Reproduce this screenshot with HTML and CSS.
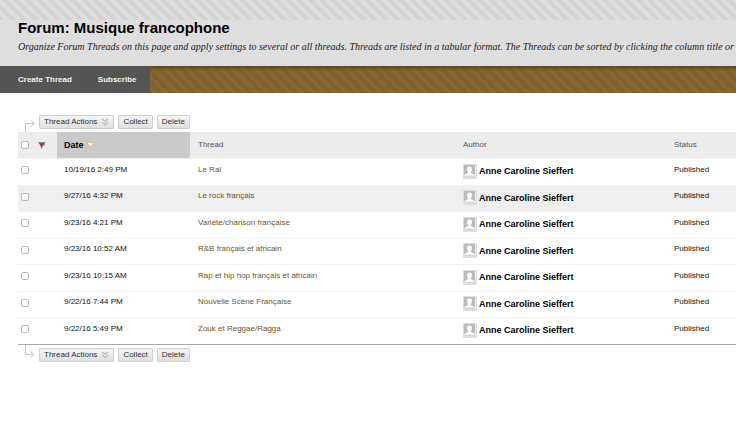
FILE: index.html
```html
<!DOCTYPE html>
<html lang="en">
<head>
<meta charset="utf-8">
<title>Forum: Musique francophone</title>
<link rel="stylesheet" href="styles.css">
</head>
<body>
<svg class="defs" aria-hidden="true">
  <symbol id="person" viewBox="0 0 14 15">
    <path d="M.5.5h13v13H.5z" fill="#eee" stroke="#ddd"/>
    <path d="M1 1h11v10H1z" fill="#bbb"/>
    <path d="M2 11V10.500C3 9.900 4.500 9.500 5.300 8.700C4 7 3.900 5 4.300 3.800C5 2 8 2 8.700 3.800C9.100 5 9 7 7.700 8.700C8.500 9.500 10 9.900 11 10.500V11z" fill="#fff"/>
    <path d="M1 12.500h11" stroke="#d6d6d6"/>
    <path d="M0 14.500h14" stroke="#ddd"/>
  </symbol>
  <symbol id="chevrons" viewBox="0 0 8 8">
    <path d="M1 .8l3 2.700L7 .8M1 4l3 2.700L7 4" fill="none" stroke="#bbb" stroke-width="1.200"/>
  </symbol>
</svg>
<header class="page-head">
  <h1>Forum: Musique francophone</h1>
  <p>Organize Forum Threads on this page and apply settings to several or all threads. Threads are listed in a tabular format. The Threads can be sorted by clicking the column title or the</p>
</header>
<nav class="action-bar">
  <ul>
    <li><a href="#create">Create Thread</a></li>
    <li><a href="#subscribe">Subscribe</a></li>
  </ul>
</nav>
<main>
  <div class="tools">
    <svg class="hook" viewBox="0 0 13 14" aria-hidden="true"><path d="M1.500 14V5.500H10M7 2.500l3.500 3L7 8.500" fill="none" stroke="#c4c4c4"/></svg>
    <button type="button">Thread Actions <svg class="chev" aria-hidden="true"><use href="#chevrons"/></svg></button>
    <button type="button">Collect</button>
    <button type="button">Delete</button>
  </div>
  <table>
    <thead>
      <tr>
        <th class="check"><input type="checkbox" aria-label="Select all threads"></th>
        <th class="flag"><svg viewBox="0 0 8 8" aria-label="Flag"><path d="M.5 1l3 .5L7.500 1 6.500 3l.5 1.500-2-.2L3.800 8z" fill="#80606a"/><path d="M1.200 1.800l4 .3-1.200 2.400-1 0z" fill="#a02f40"/></svg></th>
        <th class="date">Date <svg viewBox="0 0 9 6" aria-hidden="true"><path d="M.6.6h7.800L4.500 5.200z" fill="#fff8cf" stroke="#c9b183" stroke-width=".8"/></svg></th>
        <th class="thread">Thread</th>
        <th class="author">Author</th>
        <th>Status</th>
      </tr>
    </thead>
    <tbody>
      <tr><td><input type="checkbox" aria-label="Select Le Raï"></td><td></td><td>10/19/16 2:49 PM</td><td><a href="#t1">Le Raï</a></td><td class="who"><div><svg><use href="#person"/></svg>Anne Caroline Sieffert</div></td><td>Published</td></tr>
      <tr><td><input type="checkbox" aria-label="Select Le rock français"></td><td></td><td>9/27/16 4:32 PM</td><td><a href="#t2">Le rock français</a></td><td class="who"><div><svg><use href="#person"/></svg>Anne Caroline Sieffert</div></td><td>Published</td></tr>
      <tr><td><input type="checkbox" aria-label="Select Variété/chanson française"></td><td></td><td>9/23/16 4:21 PM</td><td><a href="#t3">Variété/chanson française</a></td><td class="who"><div><svg><use href="#person"/></svg>Anne Caroline Sieffert</div></td><td>Published</td></tr>
      <tr><td><input type="checkbox" aria-label="Select R&amp;B français et africain"></td><td></td><td>9/23/16 10:52 AM</td><td><a href="#t4">R&amp;B français et africain</a></td><td class="who"><div><svg><use href="#person"/></svg>Anne Caroline Sieffert</div></td><td>Published</td></tr>
      <tr><td><input type="checkbox" aria-label="Select Rap et hip hop français et africain"></td><td></td><td>9/23/16 10:15 AM</td><td><a href="#t5">Rap et hip hop français et africain</a></td><td class="who"><div><svg><use href="#person"/></svg>Anne Caroline Sieffert</div></td><td>Published</td></tr>
      <tr><td><input type="checkbox" aria-label="Select Nouvelle Scène Française"></td><td></td><td>9/22/16 7:44 PM</td><td><a href="#t6">Nouvelle Scène Française</a></td><td class="who"><div><svg><use href="#person"/></svg>Anne Caroline Sieffert</div></td><td>Published</td></tr>
      <tr><td><input type="checkbox" aria-label="Select Zouk et Reggae/Ragga"></td><td></td><td>9/22/16 5:49 PM</td><td><a href="#t7">Zouk et Reggae/Ragga</a></td><td class="who"><div><svg><use href="#person"/></svg>Anne Caroline Sieffert</div></td><td>Published</td></tr>
    </tbody>
  </table>
  <div class="tools tools-bottom">
    <svg class="hook" viewBox="0 0 13 14" aria-hidden="true"><path d="M1.500 0V9.500H9M6.500 6.500l3.500 3L6.500 12.500" fill="none" stroke="#cacaca"/></svg>
    <button type="button">Thread Actions <svg class="chev" aria-hidden="true"><use href="#chevrons"/></svg></button>
    <button type="button">Collect</button>
    <button type="button">Delete</button>
  </div>
</main>
</body>
</html>
```
FILE: styles.css
```css
* { box-sizing: border-box; }

body {
  margin: 0;
  background: #fff;
  color: #111;
  font: 8px/12px "Liberation Sans", Arial, sans-serif;
  overflow-x: hidden;
}

.defs { display: none; }

.page-head {
  height: 66px;
  padding: 18px 0 0 18px;
  background: repeating-linear-gradient(45deg, #d3d3d3 0 3px, #dedede 4px 7px, #d3d3d3 8px) 0 0 / 100% 20px no-repeat #dedede;
  overflow: hidden;
  white-space: nowrap;
}

h1 {
  margin: 0;
  color: #000;
  font-size: 15px;
  line-height: 20px;
}

.page-head p {
  margin: 3px 0 0;
  color: #222;
  font: italic 10px/12px "Liberation Serif", serif;
}

.action-bar {
  height: 27px;
  background:
    linear-gradient(#5c4a22, rgba(92, 74, 34, 0) 5px),
    repeating-linear-gradient(45deg, #80602f 0 3px, #896733 4px 7px, #80602f 8px);
}

.action-bar ul {
  display: flex;
  gap: 26px;
  width: max-content;
  height: 100%;
  margin: 0;
  padding: 0 14px 0 18px;
  align-items: center;
  background: #555;
  list-style: none;
}

.action-bar a {
  color: #f4f4f4;
  font-weight: bold;
  text-decoration: none;
}

main { padding: 22px 0 0 18px; }

.tools {
  display: flex;
  height: 17px;
  gap: 4px;
  padding-left: 6px;
}

.tools-bottom {
  height: 20px;
  padding-top: 3px;
}

.hook {
  width: 13px;
  height: 14px;
  align-self: flex-end;
  margin-right: -2px;
}

.tools-bottom .hook { align-self: flex-start; margin-top: -3px; }

button {
  display: flex;
  height: 14px;
  padding: 0 4px;
  align-items: center;
  gap: 4px;
  background: linear-gradient(#f5f5f5, #dfdfdf);
  border: 1px solid #cfcfcf;
  border-radius: 1px;
  color: #333;
  font: inherit;
}

.chev { width: 8px; height: 8px; }

table {
  width: 100%;
  border-collapse: collapse;
  border-bottom: 1px solid #aaa;
  table-layout: fixed;
}

th, td {
  padding: 0 8px;
  text-align: left;
  vertical-align: middle;
}

th {
  height: 26px;
  background: #ececec;
  color: #555;
  font-weight: normal;
}

.check { width: 16px; }
.flag { width: 23px; }
.date { width: 133px; }
.thread { width: 265px; }
.author { width: 211px; }

th.flag { padding: 0 4px; }
th.flag svg { display: block; width: 8px; height: 8px; }

th.date {
  background: #cacaca;
  color: #000;
  font-size: 9px;
  font-weight: bold;
}

th.date svg { width: 9px; height: 6px; }

td {
  height: 27px;
  padding-bottom: 4px;
  border-top: 1px solid #f2f2f2;
}

tbody tr:nth-child(even) td { height: 26px; }
tbody tr:nth-child(2) td { background: #efefef; }

th:nth-child(3), td:nth-child(3) { padding-left: 7px; }
th:first-child, td:first-child { padding-left: 3px; padding-right: 0; }
td:first-child { padding-bottom: 3px; }

input {
  display: block;
  width: 8px;
  height: 8px;
  margin: 0;
  appearance: none;
  background: #fff;
  border: 1px solid #b8b8b8;
  border-radius: 2px;
}

td a { color: #705428; text-decoration: none; }

td.who { padding-bottom: 1px; }

.who div {
  display: flex;
  gap: 2px;
  align-items: center;
  color: #000;
  font-size: 9px;
  font-weight: bold;
}

.who svg { width: 14px; height: 15px; }
```
